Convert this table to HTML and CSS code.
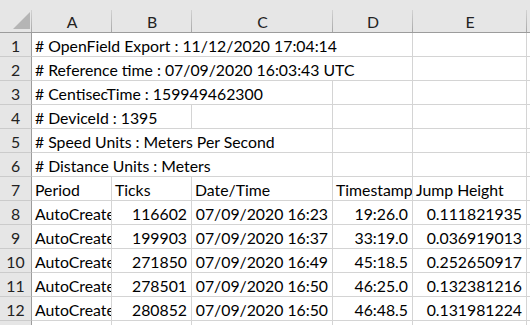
FILE: index.html
```html
<!DOCTYPE html>
<html lang="en">
<head>
  <meta charset="UTF-8" />
  <meta name="viewport" content="width=device-width, initial-scale=1.0"/>
  <title>OpenField Export</title>
  <link rel="stylesheet" href="styles.css">
</head>
<body>
  <div class="sheet" id="sheet"></div>

  <script>
    const letters = ['A', 'B', 'C', 'D', 'E'];

    // a cell is either plain text or [text, columns it spills over]
    const rows = [
      [['# OpenField Export : 11/12/2020 17:04:14', 4], ''],
      [['# Reference time : 07/09/2020 16:03:43 UTC', 4], ''],
      [['# CentisecTime : 159949462300', 3], '', ''],
      [['# DeviceId : 1395', 2], '', '', ''],
      [['# Speed Units : Meters Per Second', 3], '', ''],
      [['# Distance Units : Meters', 3], '', ''],
      ['Period', 'Ticks', 'Date/Time', 'Timestamp', 'Jump Height'],
      ['AutoCreated', '116602', '07/09/2020 16:23', '19:26.0', '0.111821935'],
      ['AutoCreated', '199903', '07/09/2020 16:37', '33:19.0', '0.036919013'],
      ['AutoCreated', '271850', '07/09/2020 16:49', '45:18.5', '0.252650917'],
      ['AutoCreated', '278501', '07/09/2020 16:50', '46:25.0', '0.132381216'],
      ['AutoCreated', '280852', '07/09/2020 16:50', '46:48.5', '0.131981224'],
      ['', '', '', '', '']
    ];

    const sheet = document.getElementById('sheet');

    function addCell(cls, text) {
      const div = document.createElement('div');
      div.className = cls;
      div.textContent = text;
      sheet.appendChild(div);
    }

    // column headers
    sheet.innerHTML = `<div class="corner">
        <svg width="17" height="17" viewBox="0 0 17 17"><polygon points="17,0 17,17 0,17" fill="#b5b5b5"/></svg>
      </div>`;
    letters.forEach(l => addCell('col-head', l));
    addCell('col-head fill', '');

    rows.forEach((row, i) => {
      addCell('row-head', i + 1);
      row.forEach(c => {
        const [text, span] = Array.isArray(c) ? c : [c, 1];
        let cls = 'cell';
        if (span > 1) cls += ' span-' + span;
        if (/^[\d.]/.test(text)) cls += ' num'; // numbers and dates sit on the right
        addCell(cls, text);
      });
      addCell('cell fill', '');
    });
  </script>
</body>
</html>
```

FILE: styles.css
```css
body {
  margin: 0;
  background: #fff;
  font-family: Lato, 'Liberation Sans', sans-serif;
  color: #000;
}

.sheet {
  display: grid;
  grid-template-columns: 32px 80px 80px 141px 80px 114px 1fr;
  grid-template-rows: 33px;
  grid-auto-rows: 24px;
  font-size: 15.8px;
  line-height: 20px;
}

.sheet > div {
  box-sizing: border-box;
  display: flex;
  align-items: flex-end;
  white-space: nowrap;
  overflow: hidden;
}

.corner,
.col-head {
  background: #e6e6e6 linear-gradient(#d2d2d2, #a8a8a8) no-repeat right bottom / 1px 22px;
  border-bottom: 1px solid #9c9c9c;
  justify-content: center;
  color: #222;
}

.corner {
  justify-content: flex-end;
  padding: 0 2px 3px 0;
}

.corner svg {
  display: block;
}

.row-head {
  background: #e6e6e6;
  border-right: 1px solid #9c9c9c;
  border-bottom: 1px solid #cbcbcb;
  justify-content: center;
  color: #222;
}

.cell {
  border-right: 1px solid #d4d4d4;
  border-bottom: 1px solid #d4d4d4;
  padding: 0 4px 0 3px;
}

.cell.num {
  justify-content: flex-end;
}

.span-2 { grid-column: span 2; }
.span-3 { grid-column: span 3; }
.span-4 { grid-column: span 4; }

.fill {
  border-right: none;
}

.col-head.fill {
  background-image: none;
}
```
